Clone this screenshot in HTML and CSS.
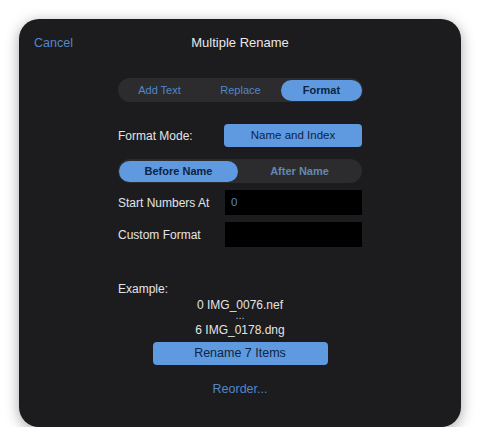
FILE: index.html
```html
<!DOCTYPE html>
<html>
<head>
<meta charset="utf-8">
<link rel="stylesheet" href="styles.css">
</head>
<body>
<div class="panel">
  <div class="header">
    <span class="cancel">Cancel</span>
    <span class="title">Multiple Rename</span>
  </div>
  <div class="content">
    <div class="seg seg-top">
      <span class="seg-item">Add Text</span>
      <span class="seg-item">Replace</span>
      <span class="seg-item active">Format</span>
    </div>
    <div class="row row-mode">
      <span class="label">Format Mode:</span>
      <span class="btn-mode">Name and Index</span>
    </div>
    <div class="seg seg-pos">
      <span class="seg-item active">Before Name</span>
      <span class="seg-item">After Name</span>
    </div>
    <div class="row row-input">
      <span class="label">Start Numbers At</span>
      <span class="input">0</span>
    </div>
    <div class="row row-input">
      <span class="label">Custom Format</span>
      <span class="input"></span>
    </div>
    <div class="example-label">Example:</div>
    <div class="example">
      <div class="ex-line">0 IMG_0076.nef</div>
      <div class="ex-dots">⋯</div>
      <div class="ex-line">6 IMG_0178.dng</div>
    </div>
    <div class="rename-btn">Rename 7 Items</div>
    <div class="reorder">Reorder...</div>
  </div>
</div>
</body>
</html>
```
FILE: styles.css
```css
html, body {
  margin: 0;
  padding: 0;
  background: #ffffff;
}
body {
  font-family: "Liberation Sans", Arial, sans-serif;
  font-size: 12px;
  color: #e4e4e6;
  padding: 19px 0 0 19px;
}
.panel {
  width: 442px;
  height: 408px;
  background: #1c1c1e;
  border-radius: 20px;
  box-shadow: 0 3px 14px rgba(0,0,0,0.35);
  box-sizing: border-box;
  position: relative;
}
.header {
  height: 46px;
  display: flex;
  align-items: center;
  justify-content: center;
  position: relative;
}
.cancel {
  position: absolute;
  left: 15px;
  top: 17px;
  color: #5287c8;
  font-size: 12.5px;
}
.title {
  font-size: 13px;
  color: #e8e8ea;
  margin-top: 1px;
}
.content {
  width: 244px;
  margin: 0 auto;
  display: flex;
  flex-direction: column;
}
.seg {
  height: 24px;
  border-radius: 12px;
  background: #2c2c2e;
  display: flex;
  align-items: center;
  padding: 0 1px;
}
.seg-top {
  margin-top: 13px;
  width: 243px;
}
.seg-item {
  flex: 1;
  text-align: center;
  color: #5287c8;
  font-size: 11px;
  height: 21px;
  line-height: 21px;
  border-radius: 11px;
}
.seg-item.active {
  background: #5f9ae0;
  color: #0e2440;
  font-weight: bold;
}
.seg-pos .seg-item {
  font-weight: bold;
  color: #6589b0;
}
.seg-pos .seg-item.active {
  color: #0e2440;
}
.seg-pos .seg-item:first-child {
  flex: 0 0 119px;
}
.row {
  display: flex;
  align-items: center;
  justify-content: space-between;
}
.label {
  font-size: 12px;
  color: #e4e4e6;
}
.row-mode {
  margin-top: 22px;
  height: 23px;
}
.btn-mode {
  width: 138px;
  height: 23px;
  line-height: 23px;
  background: #5f9ae0;
  color: #0e2440;
  border-radius: 4px;
  text-align: center;
  font-size: 11.5px;
}
.seg-pos {
  margin-top: 12px;
}
.row-input {
  height: 25px;
  margin-top: 7px;
}
.input {
  width: 137px;
  height: 25px;
  line-height: 25px;
  background: #000000;
  color: #5287c8;
  padding-left: 6px;
  box-sizing: border-box;
  font-size: 11.5px;
}
.example-label {
  margin-top: 35px;
  height: 15px;
  line-height: 15px;
  font-size: 12px;
}
.example {
  text-align: center;
  font-size: 12px;
  margin-top: 1px;
}
.ex-line {
  height: 15px;
  line-height: 15px;
}
.ex-dots {
  height: 10px;
  line-height: 10px;
  font-size: 9px;
  font-family: "DejaVu Sans", sans-serif;
  color: #c8c8ca;
}
.rename-btn {
  align-self: center;
  width: 175px;
  height: 23px;
  line-height: 23px;
  margin-top: 4px;
  background: #5f9ae0;
  color: #0e2440;
  border-radius: 4px;
  text-align: center;
  font-size: 12.5px;
}
.reorder {
  text-align: center;
  color: #5287c8;
  font-size: 12.5px;
  height: 15px;
  line-height: 15px;
  margin-top: 17px;
}
```
